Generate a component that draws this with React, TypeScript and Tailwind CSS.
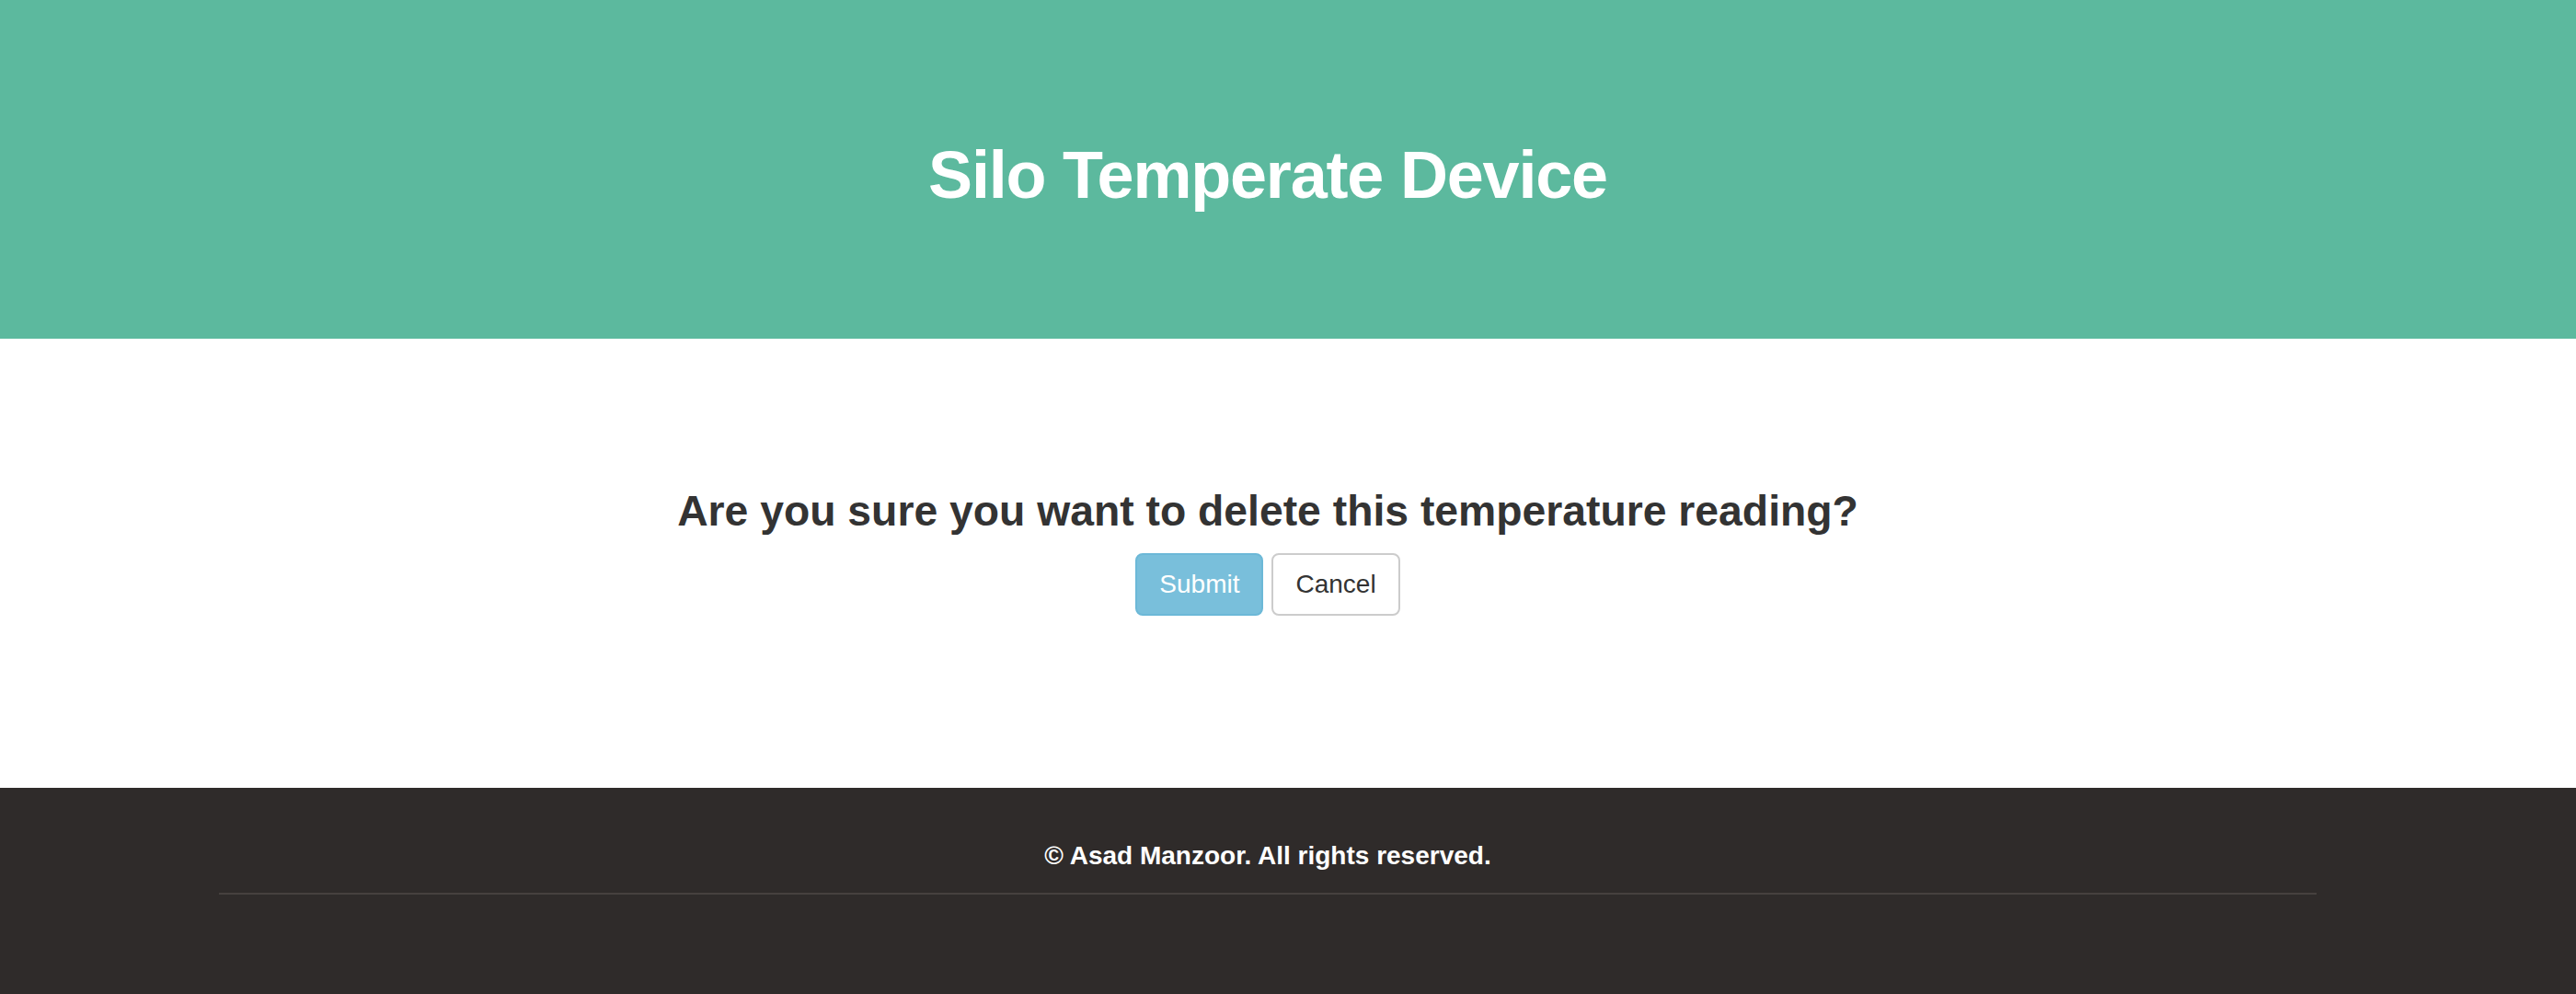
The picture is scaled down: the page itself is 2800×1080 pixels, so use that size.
export default function App() {
  const font = { fontFamily: '"Liberation Sans", Arial, Helvetica, sans-serif' };
  return (
    <div style={font} className="w-full min-h-[1080px] flex flex-col bg-white">
      <header className="h-[368px] bg-[#5cb99e]">
        <div className="w-[2756px] h-full flex items-center justify-center">
          <h1 className="text-[72px] font-bold text-white tracking-[-1.2px] leading-none pt-[12px]">
            Silo Temperate Device
          </h1>
        </div>
      </header>
      <main className="h-[488px]">
        <div className="w-[2756px] flex flex-col items-center pt-[162px]">
          <h3 className="text-[46.3px] leading-[1.1] font-bold text-[#333333]">
            Are you sure you want to delete this temperature reading?
          </h3>
          <div className="flex gap-[9px] mt-[20px]">
            <button className="h-[68px] px-[24px] rounded-[8px] border-2 border-[#6cb8d7] bg-[#79bfdb] text-white text-[28px]">
              Submit
            </button>
            <button className="h-[68px] px-[24px] rounded-[8px] border-2 border-[#cccccc] bg-white text-[#333333] text-[28px]">
              Cancel
            </button>
          </div>
        </div>
      </main>
      <footer className="flex-1 bg-[#2f2b2a] min-h-[224px]">
        <div className="w-[2756px]">
          <div className="w-[2280px] mx-auto pt-[56px]">
            <p className="text-center text-white font-bold text-[28px] leading-[36px]">
              © Asad Manzoor. All rights reserved.
            </p>
            <div className="mt-[22px] h-[2px] bg-[#46413f]" />
          </div>
        </div>
      </footer>
    </div>
  );
}
